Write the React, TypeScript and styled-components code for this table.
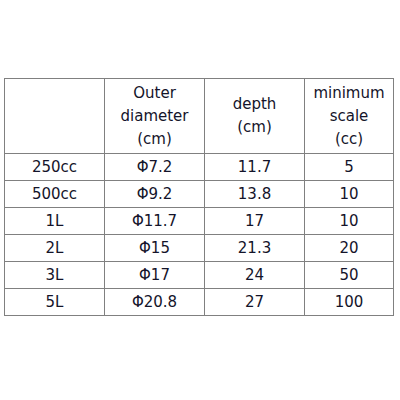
import React from 'react';
import styled, { createGlobalStyle } from 'styled-components';

const GlobalStyle = createGlobalStyle`
  html, body {
    margin: 0;
    padding: 0;
    background: #ffffff;
  }
`;

const rows = [
  ['250cc', 'Φ7.2', '11.7', '5'],
  ['500cc', 'Φ9.2', '13.8', '10'],
  ['1L', 'Φ11.7', '17', '10'],
  ['2L', 'Φ15', '21.3', '20'],
  ['3L', 'Φ17', '24', '50'],
  ['5L', 'Φ20.8', '27', '100'],
];

const App = () => {
  return (
    <Wrapper>
      <GlobalStyle />
      <Table>
        <colgroup>
          <Col $w={100} />
          <Col $w={100} />
          <Col $w={100} />
          <Col $w={89} />
        </colgroup>
        <thead>
          <HeadRow>
            <Cell></Cell>
            <Cell>
              Outer
              <br />
              diameter
              <br />
              (cm)
            </Cell>
            <Cell>
              depth
              <br />
              (cm)
            </Cell>
            <Cell>
              minimum
              <br />
              scale
              <br />
              (cc)
            </Cell>
          </HeadRow>
        </thead>
        <tbody>
          {rows.map((r) => (
            <BodyRow key={r[0]}>
              {r.map((v, i) => (
                <Cell key={i}>{v}</Cell>
              ))}
            </BodyRow>
          ))}
        </tbody>
      </Table>
    </Wrapper>
  );
};

const Wrapper = styled.div`
  width: 400px;
  height: 400px;
  padding: 78px 0 0 4px;
  box-sizing: border-box;
`;

const Table = styled.table`
  border-collapse: collapse;
  table-layout: fixed;
  width: 390px;
  font-family: 'DejaVu Sans', Verdana, sans-serif;
  font-size: 15px;
  color: #14142a;
`;

const Col = styled.col<{ $w: number }>`
  width: ${(p) => p.$w}px;
`;

const HeadRow = styled.tr`
  height: 75px;
`;

const BodyRow = styled.tr`
  height: 27px;
`;

const Cell = styled.td`
  border: 1px solid #808080;
  text-align: center;
  vertical-align: middle;
  padding: 0;
  line-height: 23px;
`;

export default App;
